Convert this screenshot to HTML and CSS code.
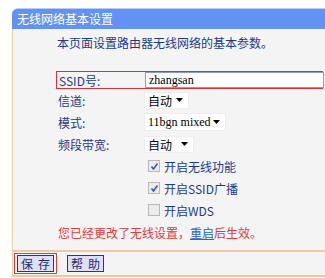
FILE: index.html
```html
<!DOCTYPE html>
<html>
<head>
<meta charset="utf-8">
<link rel="stylesheet" href="styles.css">
</head>
<body>
<div class="panel">
  <div class="title">无线网络基本设置</div>
  <div class="content">
    <div class="intro">本页面设置路由器无线网络的基本参数。</div>
    <div class="form">
      <div class="row ssid">
        <span class="label">SSID号:</span>
        <span class="input">zhangsan</span>
      </div>
      <div class="row">
        <span class="label">信道:</span>
        <span class="select w45">自动<svg class="arrow" width="7" height="4" viewBox="0 0 7 4"><path d="M0 0H7L3.5 4Z" fill="#000"/></svg></span>
      </div>
      <div class="row">
        <span class="label">模式:</span>
        <span class="select w82 latin">11bgn mixed<svg class="arrow" width="7" height="4" viewBox="0 0 7 4"><path d="M0 0H7L3.5 4Z" fill="#000"/></svg></span>
      </div>
      <div class="row">
        <span class="label">频段带宽:</span>
        <span class="select w50">自动<svg class="arrow" width="7" height="4" viewBox="0 0 7 4"><path d="M0 0H7L3.5 4Z" fill="#000"/></svg></span>
      </div>
      <div class="row">
        <span class="label"></span>
        <span class="check"><span class="box"><svg width="9" height="9" viewBox="0 0 9 9"><path d="M1.5 4.5L3.5 7L7.5 1.5" fill="none" stroke="#3355bb" stroke-width="1.6"/></svg></span>开启无线功能</span>
      </div>
      <div class="row">
        <span class="label"></span>
        <span class="check"><span class="box"><svg width="9" height="9" viewBox="0 0 9 9"><path d="M1.5 4.5L3.5 7L7.5 1.5" fill="none" stroke="#3355bb" stroke-width="1.6"/></svg></span>开启SSID广播</span>
      </div>
      <div class="row">
        <span class="label"></span>
        <span class="check"><span class="box"></span>开启WDS</span>
      </div>
    </div>
    <div class="notice">您已经更改了无线设置，<a class="link">重启</a>后生效。</div>
    <div class="buttons">
      <span class="btn-focus"><span class="btn"><span>保</span><span>存</span></span></span>
      <span class="btn"><span>帮</span><span>助</span></span>
    </div>
  </div>
</div>
</body>
</html>
```

FILE: styles.css
```css
html, body {
  margin: 0;
  padding: 0;
  background: #ffffff;
  overflow: hidden;
}
body {
  font-family: "Noto Sans CJK SC", "Liberation Sans", sans-serif;
  font-size: 12px;
  color: #1c3a8c;
}
.panel {
  margin: 8px 0 0 12px;
  width: 320px;
}
.title {
  height: 20px;
  line-height: 20px;
  border-top: 1px solid #b4cdfa;
  background: #6292f3;
  border-top-left-radius: 6px;
  color: #ffffff;
  padding-left: 5px;
}
.content {
  background: #f4f4f4;
  border-left: 1px solid #e8cfa6;
}
.intro {
  padding: 6px 0 0 44px;
  height: 17px;
  line-height: 16px;
  color: #1c3a8c;
}
.form {
  padding: 19px 0 0 43px;
}
.row {
  display: flex;
  align-items: center;
  height: 22px;
}
.row.ssid {
  height: 16px;
  border: 1px solid #d9333a;
  width: 265px;
}
.label {
  width: 86px;
  padding-left: 2px;
  flex: none;
}
.input {
  flex: none;
  width: 174px;
  height: 14px;
  line-height: 14px;
  border: 1px solid #8c9acb;
  background: #ffffff;
  font-family: "Liberation Serif", serif;
  font-size: 12px;
  color: #000;
  padding-left: 3px;
}
.select {
  display: flex;
  align-items: center;
  justify-content: space-between;
  height: 17px;
  background: #ffffff;
  border: 1px solid #eeeeee;
  box-sizing: border-box;
  padding: 0 5px 0 3px;
  color: #000;
  font-size: 12px;
}
.select.latin {
  font-family: "Liberation Serif", serif;
  height: 18px;
}
.w45 { width: 45px; }
.w50 { width: 50px; }
.w82 { width: 82px; }
.arrow { flex: none; }
.check {
  display: flex;
  align-items: center;
  padding-left: 4px;
  color: #1c3a8c;
}
.box {
  width: 10px;
  height: 10px;
  border: 1px solid #b8b8b8;
  background: #ececec;
  margin-right: 4px;
  display: flex;
  align-items: center;
  justify-content: center;
}
.notice {
  margin-top: 3px;
  padding-left: 45px;
  height: 18px;
  line-height: 18px;
  color: #e23a3a;
}
.link {
  color: #2a62c8;
  text-decoration: underline;
}
.buttons {
  margin-top: 8px;
  border-top: 2px solid #f3c9a2;
  border-bottom: 2px solid #ecc998;
  height: 23px;
  display: flex;
  align-items: center;
  padding-left: 1px;
  gap: 10px;
}
.btn-focus {
  border: 1px solid #d04040;
  padding: 1px 2px;
  display: flex;
}
.btn {
  display: flex;
  justify-content: center;
  gap: 5px;
  width: 37px;
  box-sizing: border-box;
  height: 17px;
  line-height: 15px;
  border: 1px solid #2a3a66;
  background: #dfe0f6;
  color: #1c2a6c;
  font-size: 12px;
}
```
